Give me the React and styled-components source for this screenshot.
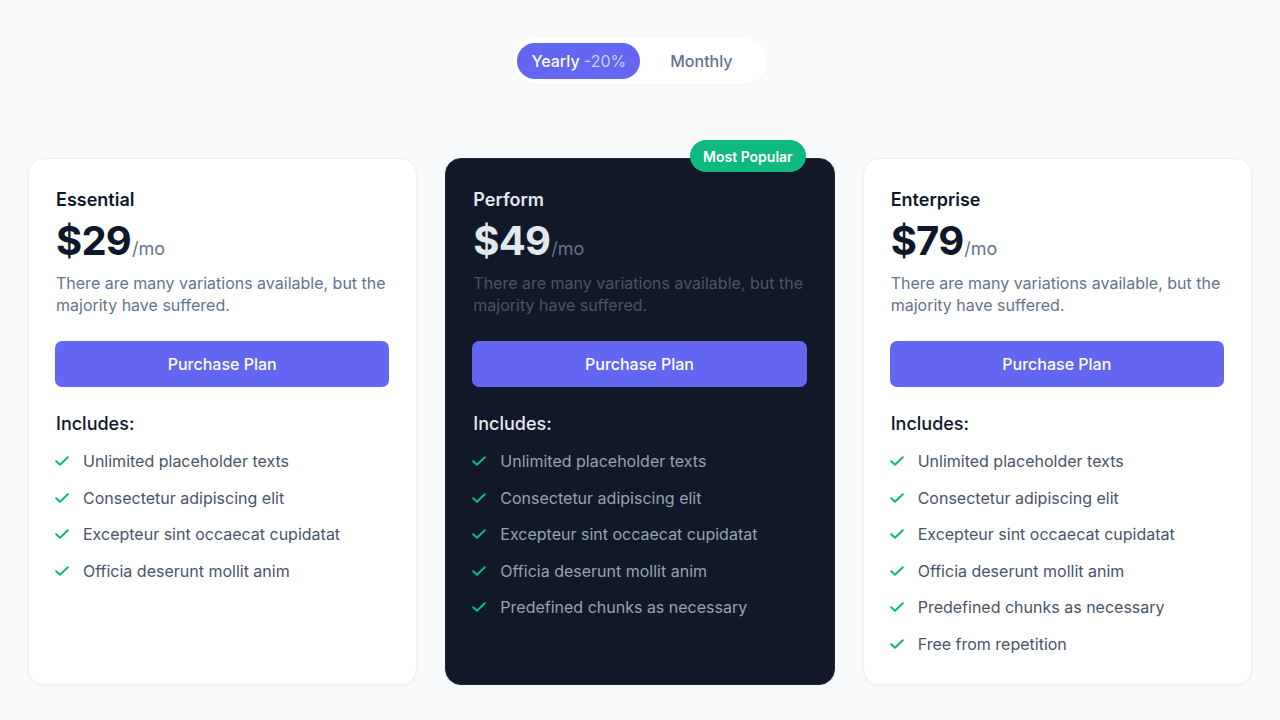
import { useState } from "react";
import styled, { createGlobalStyle } from "styled-components";

const GlobalStyle = createGlobalStyle`
  * { box-sizing: border-box; }
  body {
    margin: 0;
    background: #f8fafc;
    font-family: Inter, "Noto Sans", sans-serif;
  }
`;

const plans = [
  {
    name: "Essential",
    price: 29,
    features: [
      "Unlimited placeholder texts",
      "Consectetur adipiscing elit",
      "Excepteur sint occaecat cupidatat",
      "Officia deserunt mollit anim",
    ],
  },
  {
    name: "Perform",
    price: 49,
    dark: true,
    badge: "Most Popular",
    features: [
      "Unlimited placeholder texts",
      "Consectetur adipiscing elit",
      "Excepteur sint occaecat cupidatat",
      "Officia deserunt mollit anim",
      "Predefined chunks as necessary",
    ],
  },
  {
    name: "Enterprise",
    price: 79,
    features: [
      "Unlimited placeholder texts",
      "Consectetur adipiscing elit",
      "Excepteur sint occaecat cupidatat",
      "Officia deserunt mollit anim",
      "Predefined chunks as necessary",
      "Free from repetition",
    ],
  },
];

const CheckIcon = () => (
  <svg width="14" height="10" viewBox="0 0 14 10" fill="none">
    <path
      d="M1.2 5.2 L5 8.8 L12.8 1.2"
      stroke="#10b981"
      strokeWidth="2"
      strokeLinecap="round"
      strokeLinejoin="round"
    />
  </svg>
);

const App = () => {
  const [period, setPeriod] = useState("yearly");

  return (
    <Page>
      <GlobalStyle />
      <Toggle>
        <ToggleButton $active={period === "yearly"} $pad={14} onClick={() => setPeriod("yearly")}>
          Yearly <Discount>-20%</Discount>
        </ToggleButton>
        <ToggleButton $active={period === "monthly"} $pad={30} onClick={() => setPeriod("monthly")}>
          Monthly
        </ToggleButton>
      </Toggle>

      <Grid>
        {plans.map((plan) => (
          <Card key={plan.name} $dark={plan.dark}>
            {plan.badge && <Badge>{plan.badge}</Badge>}
            <PlanName $dark={plan.dark}>{plan.name}</PlanName>
            <PriceRow>
              <Price $dark={plan.dark}>${plan.price}</Price>
              <Per>/mo</Per>
            </PriceRow>
            <Description $dark={plan.dark}>
              There are many variations available, but the majority have suffered.
            </Description>
            <PurchaseButton>Purchase Plan</PurchaseButton>
            <Includes $dark={plan.dark}>Includes:</Includes>
            <FeatureList>
              {plan.features.map((f) => (
                <Feature key={f} $dark={plan.dark}>
                  <CheckIcon />
                  {f}
                </Feature>
              ))}
            </FeatureList>
          </Card>
        ))}
      </Grid>
    </Page>
  );
};

const Page = styled.div`
  min-height: 720px;
  padding: 38px 28px 0;
  display: flex;
  flex-direction: column;
  align-items: center;
`;

const Toggle = styled.div`
  display: flex;
  padding: 5px 4px;
  background: #ffffff;
  border-radius: 999px;
  box-shadow: 0 1px 2px rgba(15, 23, 42, 0.03);
`;

const ToggleButton = styled.button`
  height: 36px;
  padding: 0 ${(p) => p.$pad}px;
  border: none;
  border-radius: 999px;
  font-family: inherit;
  font-size: 16px;
  font-weight: 500;
  cursor: pointer;
  background: ${(p) => (p.$active ? "#6366f1" : "transparent")};
  color: ${(p) => (p.$active ? "#ffffff" : "#64748b")};
`;

const Discount = styled.span`
  color: #c7d2fe;
  font-weight: 400;
`;

const Grid = styled.div`
  width: 100%;
  margin-top: 74px;
  display: grid;
  grid-template-columns: repeat(3, 1fr);
  gap: 28px;
`;

const Card = styled.div`
  position: relative;
  height: 527px;
  padding: 27px 27px 28px 26px;
  border-radius: 16px;
  background: ${(p) => (p.$dark ? "#111827" : "#ffffff")};
  border: 1px solid ${(p) => (p.$dark ? "#1e293b" : "#edf1f5")};
  box-shadow: 0 1px 3px rgba(15, 23, 42, 0.05);
`;

const Badge = styled.span`
  position: absolute;
  top: -19px;
  right: 28px;
  height: 32px;
  padding: 0 13px;
  display: flex;
  align-items: center;
  border-radius: 999px;
  background: #10b981;
  color: #ffffff;
  font-size: 14px;
  font-weight: 600;
`;

const PlanName = styled.h3`
  margin: 0 0 0 1px;
  font-size: 18px;
  line-height: 28px;
  font-weight: 600;
  color: ${(p) => (p.$dark ? "#e2e8f0" : "#0f172a")};
`;

const PriceRow = styled.div`
  margin: 7px 0 0 1px;
  display: flex;
  align-items: baseline;
  height: 40px;
`;

const Price = styled.span`
  font-size: 40px;
  line-height: 40px;
  font-weight: 700;
  letter-spacing: -0.8px;
  color: ${(p) => (p.$dark ? "#e2e8f0" : "#0f172a")};
`;

const Per = styled.span`
  margin-left: 1px;
  font-size: 18px;
  color: #64748b;
`;

const Description = styled.p`
  margin: 11px 0 0 1px;
  font-size: 16px;
  line-height: 22px;
  color: ${(p) => (p.$dark ? "#475569" : "#64748b")};
`;

const PurchaseButton = styled.button`
  margin-top: 25px;
  width: 100%;
  height: 46px;
  border: none;
  border-radius: 7px;
  background: #6366f1;
  color: #ffffff;
  font-family: inherit;
  font-size: 16px;
  font-weight: 500;
  cursor: pointer;
`;

const Includes = styled.h4`
  margin: 23px 0 0 1px;
  font-size: 18px;
  line-height: 28px;
  font-weight: 500;
  color: ${(p) => (p.$dark ? "#e2e8f0" : "#0f172a")};
`;

const FeatureList = styled.ul`
  list-style: none;
  margin: 11px 0 0;
  padding: 0;
  display: flex;
  flex-direction: column;
  gap: 12.6px;
`;

const Feature = styled.li`
  display: flex;
  align-items: center;
  gap: 14px;
  font-size: 16px;
  line-height: 24px;
  color: ${(p) => (p.$dark ? "#94a3b8" : "#475569")};
`;

export default App;
